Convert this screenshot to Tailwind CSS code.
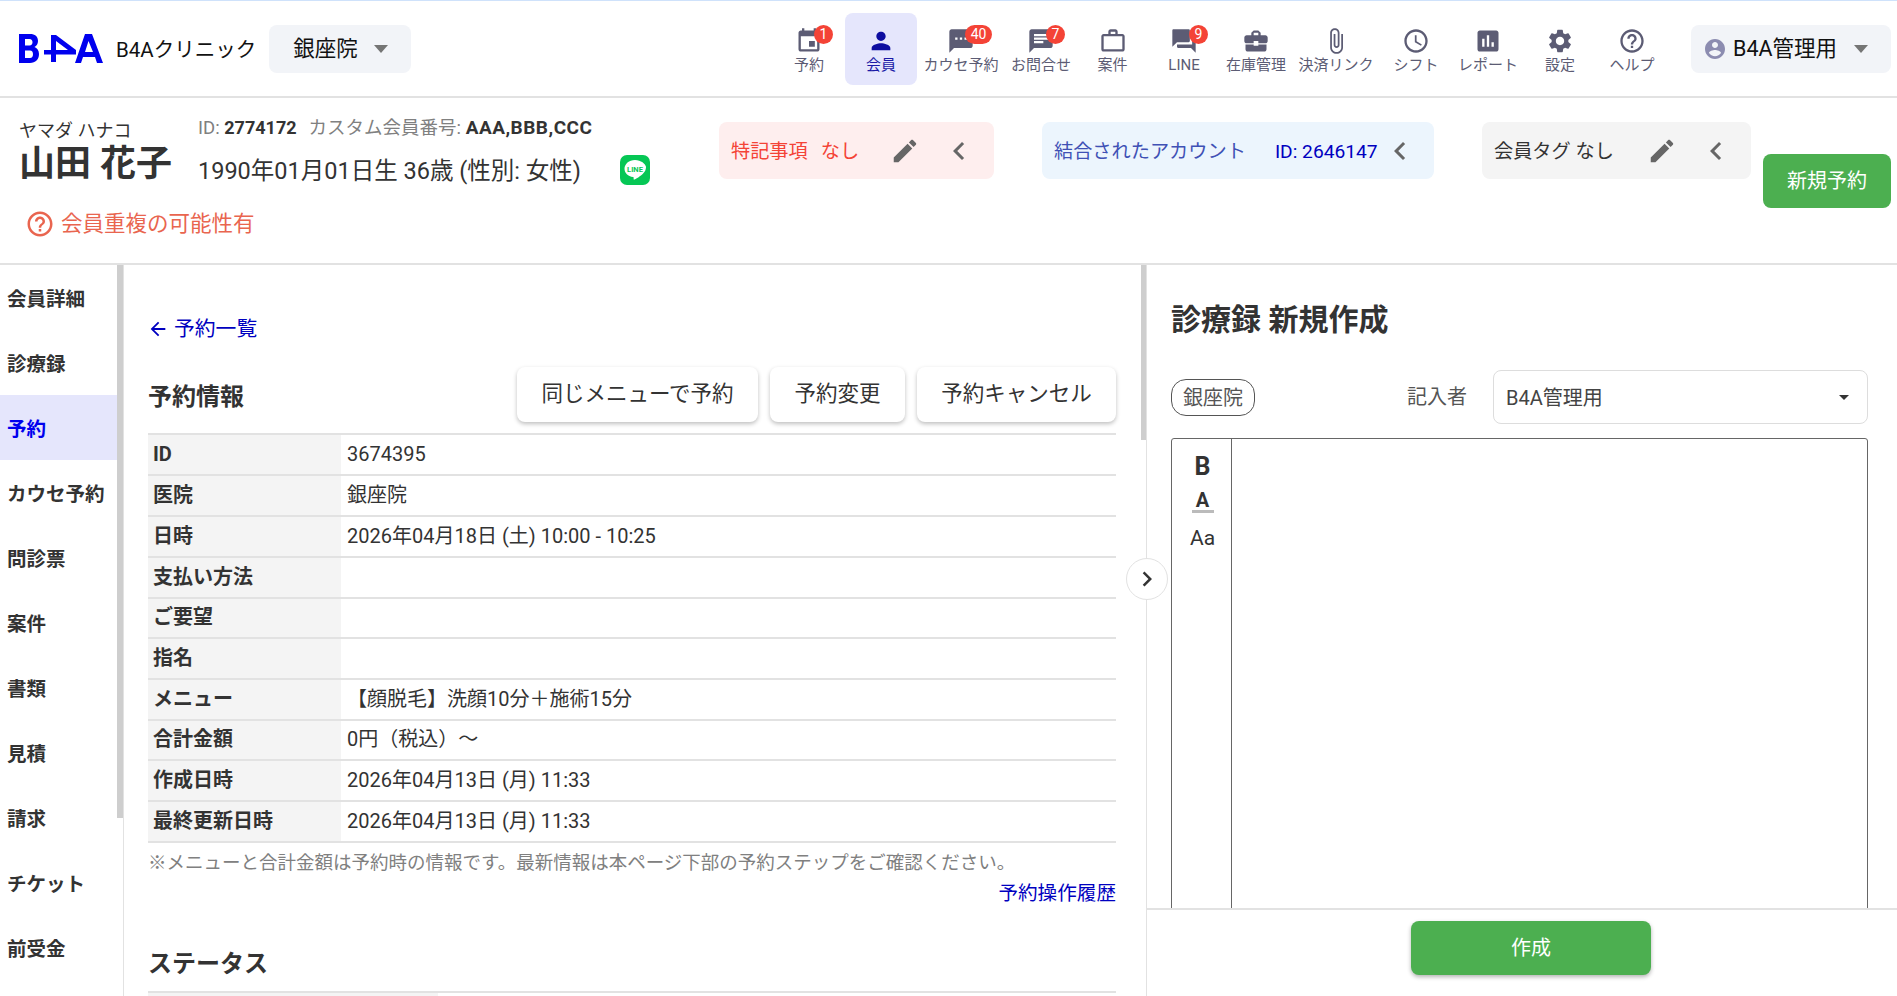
<!DOCTYPE html>
<html lang="ja">
<head>
<meta charset="utf-8">
<title>B4A</title>
<script src="https://cdn.jsdelivr.net/npm/@tailwindcss/browser@4"></script>
</head>
<body class="font-['Roboto','Noto_Sans_CJK_JP',sans-serif] text-[#333] bg-white">
<div class="h-[996px] w-[1897px] overflow-hidden flex flex-col relative">
  <!-- top nav -->
  <header class="h-[98px] shrink-0 flex items-center border-t border-t-[#cfe2fb] border-b-2 border-b-[#e2e2e2] pr-[6px]">
    <svg class="ml-[19px] w-[84px] h-[29px] shrink-0" viewBox="0 0 84 29" fill="#0000ee"><path fill-rule="evenodd" d="M0 0h11c5 0 8 2.500 8 7 0 3-1.500 5-3.500 6 2.500 1 4.500 3.500 4.500 7 0 5.500-3.500 9-9 9H0zM6 5v6.500h4.500c2 0 3-1.300 3-3.200S12.500 5 10.500 5zM6 16.500V24h5c2 0 3-1.500 3-3.700s-1-3.800-3-3.800z"/><path fill-rule="evenodd" d="M32 1h5l20 15v4.500H37V28h-5v-7.500h-7V16h7zM37 7v9h12z"/><path fill-rule="evenodd" d="M66 0h7l11 29h-6l-2-6H64l-2 6h-6zM69.500 7L66 18h8z"/></svg>
    <span class="ml-[13px] pt-[4px] text-[20.5px] text-[#111] leading-none whitespace-nowrap">B4Aクリニック</span>
    <div class="ml-[13px] w-[142px] h-[48px] rounded-lg bg-[#f2f4f8] flex items-center pl-[24px] text-[21.5px] text-[#111] whitespace-nowrap"><span class="pt-[2px]">銀座院</span><span class="ml-[16px] w-0 h-0 border-x-[7px] border-x-transparent border-t-[8px] border-t-[#757575]"></span></div>

    <nav class="ml-auto flex items-stretch text-[15px] text-[#5c5c74]">
      <a class="relative w-[72px] h-[72px] flex flex-col items-center pt-[14px]">
        <svg class="w-[28px] h-[28px]" viewBox="0 0 24 24" fill="#5c5c74"><path d="M17 12h-5v5h5v-5zM16 1v2H8V1H6v2H5c-1.110 0-1.990.9-1.990 2L3 19c0 1.100.89 2 2 2h14c1.100 0 2-.9 2-2V5c0-1.100-.9-2-2-2h-1V1h-2zm3 18H5V8h14v11z"/></svg>
        <span class="absolute left-[41px] top-[12px] min-w-[19px] h-[19px] rounded-full bg-[#f44336] text-white text-[14px] leading-[19px] text-center">1</span>
        <span class="leading-[20px] whitespace-nowrap">予約</span>
      </a>
      <a class="relative w-[72px] h-[72px] flex flex-col items-center pt-[14px] rounded-lg bg-[#e5e6fc] text-[#1a1aa6]">
        <svg class="w-[28px] h-[28px]" viewBox="0 0 24 24" fill="#0d0da0"><path d="M12 12c2.210 0 4-1.790 4-4s-1.790-4-4-4-4 1.790-4 4 1.790 4 4 4zm0 2c-2.670 0-8 1.340-8 4v2h16v-2c0-2.660-5.330-4-8-4z"/></svg>
        <span class="leading-[20px] whitespace-nowrap">会員</span>
      </a>
      <a class="relative w-[88px] h-[72px] flex flex-col items-center pt-[14px]">
        <svg class="w-[28px] h-[28px]" viewBox="0 0 24 24" fill="#5c5c74"><path d="M20 2H4c-1.100 0-1.990.9-1.990 2L2 22l4-4h14c1.100 0 2-.9 2-2V4c0-1.100-.9-2-2-2zM9 11H7V9h2v2zm4 0h-2V9h2v2zm4 0h-2V9h2v2z"/></svg>
        <span class="absolute left-[48px] top-[12px] min-w-[27px] h-[19px] rounded-full bg-[#f44336] text-white text-[14px] leading-[19px] text-center">40</span>
        <span class="leading-[20px] whitespace-nowrap">カウセ予約</span>
      </a>
      <a class="relative w-[72px] h-[72px] flex flex-col items-center pt-[14px]">
        <svg class="w-[28px] h-[28px]" viewBox="0 0 24 24" fill="#5c5c74"><path d="M20 2H4c-1.100 0-1.990.9-1.990 2L2 22l4-4h14c1.100 0 2-.9 2-2V4c0-1.100-.9-2-2-2zM6 9h12v2H6V9zm8 5H6v-2h8v2zm4-6H6V6h12v2z"/></svg>
        <span class="absolute left-[41px] top-[12px] min-w-[19px] h-[19px] rounded-full bg-[#f44336] text-white text-[14px] leading-[19px] text-center">7</span>
        <span class="leading-[20px] whitespace-nowrap">お問合せ</span>
      </a>
      <a class="relative w-[71px] h-[72px] flex flex-col items-center pt-[14px]">
        <svg class="w-[28px] h-[28px]" viewBox="0 0 24 24" fill="#5c5c74"><path d="M14 6V4h-4v2h4zM4 8v11h16V8H4zm16-2c1.110 0 2 .89 2 2v11c0 1.110-.89 2-2 2H4c-1.110 0-2-.89-2-2l.01-11c0-1.110.88-2 1.990-2h4V4c0-1.110.89-2 2-2h4c1.110 0 2 .89 2 2v2h4z"/></svg>
        <span class="leading-[20px] whitespace-nowrap">案件</span>
      </a>
      <a class="relative w-[72px] h-[72px] flex flex-col items-center pt-[14px]">
        <svg class="w-[28px] h-[28px]" viewBox="0 0 24 24" fill="#5c5c74"><path d="M21 6h-2v9H6v2c0 .55.45 1 1 1h11l4 4V7c0-.55-.45-1-1-1zm-4 6V3c0-.55-.45-1-1-1H3c-.55 0-1 .45-1 1v14l4-4h10c.55 0 1-.45 1-1z"/></svg>
        <span class="absolute left-[41px] top-[12px] min-w-[19px] h-[19px] rounded-full bg-[#f44336] text-white text-[14px] leading-[19px] text-center">9</span>
        <span class="leading-[20px] whitespace-nowrap">LINE</span>
      </a>
      <a class="relative w-[72px] h-[72px] flex flex-col items-center pt-[14px]">
        <svg class="w-[28px] h-[28px]" viewBox="0 0 24 24" fill="#5c5c74"><path d="M10 16v-1H3.010L3 19c0 1.110.89 2 2 2h14c1.110 0 2-.89 2-2v-4h-7v1h-4zm10-9h-4.010V5l-2-2h-4l-2 2v2H4c-1.100 0-2 .9-2 2v3c0 1.110.89 2 2 2h6v-2h4v2h6c1.100 0 2-.9 2-2V9c0-1.100-.9-2-2-2zm-6 0h-4V5h4v2z"/></svg>
        <span class="leading-[20px] whitespace-nowrap">在庫管理</span>
      </a>
      <a class="relative w-[88px] h-[72px] flex flex-col items-center pt-[14px]">
        <svg class="w-[28px] h-[28px]" viewBox="0 0 24 24" fill="#5c5c74"><path d="M16.500 6v11.500c0 2.210-1.790 4-4 4s-4-1.790-4-4V5c0-1.380 1.120-2.500 2.500-2.500s2.500 1.120 2.500 2.500v10.500c0 .55-.45 1-1 1s-1-.45-1-1V6H10v9.500c0 1.380 1.120 2.500 2.500 2.500s2.500-1.120 2.500-2.500V5c0-2.210-1.790-4-4-4S7 2.790 7 5v12.500c0 3.040 2.460 5.500 5.500 5.500s5.500-2.460 5.500-5.500V6h-1.500z"/></svg>
        <span class="leading-[20px] whitespace-nowrap">決済リンク</span>
      </a>
      <a class="relative w-[72px] h-[72px] flex flex-col items-center pt-[14px]">
        <svg class="w-[28px] h-[28px]" viewBox="0 0 24 24" fill="#5c5c74"><path d="M11.990 2C6.470 2 2 6.480 2 12s4.470 10 9.990 10C17.520 22 22 17.520 22 12S17.520 2 11.990 2zM12 20c-4.420 0-8-3.580-8-8s3.580-8 8-8 8 3.580 8 8-3.580 8-8 8zm.5-13H11v6l5.250 3.150.75-1.230-4.500-2.670z"/></svg>
        <span class="leading-[20px] whitespace-nowrap">シフト</span>
      </a>
      <a class="relative w-[72px] h-[72px] flex flex-col items-center pt-[14px]">
        <svg class="w-[28px] h-[28px]" viewBox="0 0 24 24" fill="#5c5c74"><path d="M19 3H5c-1.100 0-2 .9-2 2v14c0 1.100.9 2 2 2h14c1.100 0 2-.9 2-2V5c0-1.100-.9-2-2-2zM9 17H7v-7h2v7zm4 0h-2V7h2v10zm4 0h-2v-4h2v4z"/></svg>
        <span class="leading-[20px] whitespace-nowrap">レポート</span>
      </a>
      <a class="relative w-[72px] h-[72px] flex flex-col items-center pt-[14px]">
        <svg class="w-[28px] h-[28px]" viewBox="0 0 24 24" fill="#5c5c74"><path d="M19.140 12.940c.04-.3.06-.61.06-.94 0-.32-.02-.64-.07-.94l2.030-1.580c.18-.14.23-.41.12-.61l-1.920-3.320c-.12-.22-.37-.29-.59-.22l-2.390.96c-.5-.38-1.030-.7-1.620-.94l-.36-2.540c-.04-.24-.24-.41-.48-.41h-3.840c-.24 0-.43.17-.47.41l-.36 2.540c-.59.24-1.130.57-1.620.94l-2.390-.96c-.22-.08-.47 0-.59.22L2.740 8.870c-.12.21-.08.47.12.61l2.030 1.580c-.05.3-.09.63-.09.94s.02.64.07.94l-2.030 1.580c-.18.14-.23.41-.12.61l1.920 3.320c.12.22.37.29.59.22l2.390-.96c.5.38 1.030.7 1.620.94l.36 2.540c.05.24.24.41.48.41h3.840c.24 0 .44-.17.47-.41l.36-2.540c.59-.24 1.130-.56 1.620-.94l2.390.96c.22.08.47 0 .59-.22l1.920-3.320c.12-.22.07-.47-.12-.61l-2.010-1.580zM12 15.600c-1.980 0-3.600-1.620-3.600-3.600s1.620-3.600 3.600-3.600 3.600 1.620 3.600 3.600-1.620 3.600-3.600 3.600z"/></svg>
        <span class="leading-[20px] whitespace-nowrap">設定</span>
      </a>
      <a class="relative w-[72px] h-[72px] flex flex-col items-center pt-[14px]">
        <svg class="w-[28px] h-[28px]" viewBox="0 0 24 24" fill="#5c5c74"><path d="M11 18h2v-2h-2v2zm1-16C6.480 2 2 6.480 2 12s4.480 10 10 10 10-4.480 10-10S17.520 2 12 2zm0 18c-4.410 0-8-3.590-8-8s3.590-8 8-8 8 3.590 8 8-3.590 8-8 8zm0-14c-2.210 0-4 1.790-4 4h2c0-1.100.9-2 2-2s2 .9 2 2c0 2-3 1.750-3 5h2c0-2.250 3-2.500 3-5 0-2.210-1.790-4-4-4z"/></svg>
        <span class="leading-[20px] whitespace-nowrap">ヘルプ</span>
      </a>
    </nav>

    <div class="ml-[23px] w-[200px] h-[48px] rounded-lg bg-[#f2f4f8] flex items-center pl-[12px] text-[21.5px] text-[#111]">
      <svg class="w-[24px] h-[24px] shrink-0" viewBox="0 0 24 24" fill="#8c8cb0"><path d="M12 2C6.480 2 2 6.480 2 12s4.480 10 10 10 10-4.480 10-10S17.520 2 12 2zm0 3c1.660 0 3 1.340 3 3s-1.340 3-3 3-3-1.340-3-3 1.340-3 3-3zm0 14.200c-2.500 0-4.710-1.280-6-3.220.03-1.990 4-3.080 6-3.080 1.990 0 5.970 1.090 6 3.080-1.290 1.940-3.500 3.220-6 3.220z"/></svg>
      <span class="ml-[6px] pt-[2px] whitespace-nowrap">B4A管理用</span>
      <span class="ml-[17px] w-0 h-0 border-x-[7px] border-x-transparent border-t-[8px] border-t-[#757575]"></span>
    </div>
  </header>

  <!-- member strip -->
  <section class="h-[167px] shrink-0 border-b-2 border-b-[#e2e2e2] flex items-start pr-[6px]">
    <div class="w-[198px] shrink-0 pl-[19px] pt-[22px]">
      <div class="text-[18px] leading-[22px] text-[#333] whitespace-nowrap">ヤマダ ハナコ</div>
      <div class="text-[36px] leading-[44px] font-bold text-[#333] whitespace-nowrap">山田 花子</div>
    </div>
    <div class="w-[521px] shrink-0 pt-[19px]">
      <div class="text-[18.5px] leading-[22px] text-[#808080] whitespace-nowrap">ID: <b class="text-[#333] text-[18px]">2774172</b><span class="ml-[12px]">カスタム会員番号: </span><b class="text-[#333] text-[19px] tracking-[0.5px]">AAA,BBB,CCC</b></div>
      <div class="flex items-center mt-[16px]">
        <span class="text-[23.5px] leading-[32px] whitespace-nowrap">1990年01月01日生 36歳 (性別: 女性)</span>
        <svg class="ml-[39px] -mt-[2px] w-[30px] h-[30px] shrink-0" viewBox="0 0 30 30"><rect width="30" height="30" rx="7" fill="#06c755"/><path d="M15 5C9 5 4.500 9 4.500 13.800c0 4.200 3.500 7.700 8.500 8.300.9.200.7 1.100.6 1.800-.1.600.3.900 1 .6 2.200-1 8.200-4.800 10.300-8.300.8-1.300 1.100-2.800 1.100-4.400C25.500 9 21 5 15 5z" fill="#fff"/><text x="15" y="16.500" text-anchor="middle" font-size="7.500" font-weight="700" fill="#06c755" font-family="Roboto">LINE</text></svg>
      </div>
    </div>
    <div class="w-[275px] h-[57px] mt-[24px] shrink-0 rounded-lg bg-[#feeeee] flex items-center pl-[12px] text-[19.2px] text-[#f44336] whitespace-nowrap">
      <span class="pt-[4px]">特記事項</span><span class="ml-[13px] pt-[4px]">なし</span>
      <svg class="ml-[31px] w-[30px] h-[30px] shrink-0" viewBox="0 0 24 24" fill="#666"><path d="M3 17.250V21h3.750L17.810 9.940l-3.750-3.750L3 17.250zM20.710 7.040c.39-.39.39-1.020 0-1.410l-2.340-2.340c-.39-.39-1.020-.39-1.410 0l-1.830 1.830 3.750 3.750 1.830-1.830z"/></svg>
      <svg class="ml-[21px] w-[36px] h-[36px] shrink-0" viewBox="0 0 24 24" fill="#666"><path d="M15.410 7.410L14 6l-6 6 6 6 1.410-1.410L10.830 12z"/></svg>
    </div>
    <div class="ml-[48px] w-[392px] h-[57px] mt-[24px] shrink-0 rounded-lg bg-[#ecf5fd] flex items-center pl-[12px] text-[19.2px] text-[#3f51b5] whitespace-nowrap">
      <span class="pt-[4px]">結合されたアカウント</span><span class="ml-[29px] pt-[4px] text-[#0000c0]">ID: 2646147</span>
      <svg class="ml-[4px] w-[36px] h-[36px] shrink-0" viewBox="0 0 24 24" fill="#666"><path d="M15.410 7.410L14 6l-6 6 6 6 1.410-1.410L10.830 12z"/></svg>
    </div>
    <div class="ml-[48px] w-[269px] h-[57px] mt-[24px] shrink-0 rounded-lg bg-[#f4f4f4] flex items-center pl-[12px] text-[19.2px] text-[#333] whitespace-nowrap">
      <span class="pt-[4px]">会員タグ なし</span>
      <svg class="ml-[33px] w-[30px] h-[30px] shrink-0" viewBox="0 0 24 24" fill="#666"><path d="M3 17.250V21h3.750L17.810 9.940l-3.750-3.750L3 17.250zM20.710 7.040c.39-.39.39-1.020 0-1.410l-2.340-2.340c-.39-.39-1.020-.39-1.410 0l-1.830 1.830 3.750 3.750 1.830-1.830z"/></svg>
      <svg class="ml-[21px] w-[36px] h-[36px] shrink-0" viewBox="0 0 24 24" fill="#666"><path d="M15.410 7.410L14 6l-6 6 6 6 1.410-1.410L10.830 12z"/></svg>
    </div>
    <button class="ml-[12px] mt-[56px] w-[128px] h-[54px] shrink-0 rounded-lg bg-[#4caf50] text-white text-[20px]">新規予約</button>
  </section>
  <div class="absolute left-[25px] top-[209px] flex items-center text-[21.5px] leading-[30px] text-[#e9654f] whitespace-nowrap">
    <svg class="w-[30px] h-[30px]" viewBox="0 0 24 24" fill="#e9654f"><path d="M11 18h2v-2h-2v2zm1-16C6.480 2 2 6.480 2 12s4.480 10 10 10 10-4.480 10-10S17.520 2 12 2zm0 18c-4.410 0-8-3.590-8-8s3.590-8 8-8 8 3.590 8 8-3.590 8-8 8zm0-14c-2.210 0-4 1.790-4 4h2c0-1.100.9-2 2-2s2 .9 2 2c0 2-3 1.750-3 5h2c0-2.250 3-2.500 3-5 0-2.210-1.790-4-4-4z"/></svg>
    <span class="ml-[6px]">会員重複の可能性有</span>
  </div>

  <!-- body -->
  <div class="flex-1 min-h-0 flex">
    <aside class="relative w-[124px] shrink-0 border-r border-r-[#e2e2e2] overflow-hidden">
      <ul class="w-[117px] text-[19.5px] font-bold text-[#333]">
        <li class="h-[65px] flex items-center pl-[7px] pt-[4px]">会員詳細</li>
        <li class="h-[65px] flex items-center pl-[7px] pt-[4px]">診療録</li>
        <li class="h-[65px] flex items-center pl-[7px] pt-[4px] bg-[#e5e6fc] text-[#0000ee]">予約</li>
        <li class="h-[65px] flex items-center pl-[7px] pt-[4px] whitespace-nowrap">カウセ予約</li>
        <li class="h-[65px] flex items-center pl-[7px] pt-[4px]">問診票</li>
        <li class="h-[65px] flex items-center pl-[7px] pt-[4px]">案件</li>
        <li class="h-[65px] flex items-center pl-[7px] pt-[4px]">書類</li>
        <li class="h-[65px] flex items-center pl-[7px] pt-[4px]">見積</li>
        <li class="h-[65px] flex items-center pl-[7px] pt-[4px]">請求</li>
        <li class="h-[65px] flex items-center pl-[7px] pt-[4px]">チケット</li>
        <li class="h-[65px] flex items-center pl-[7px] pt-[4px]">前受金</li>
      </ul>
      <div class="absolute left-[117px] top-0 w-[6px] h-[553px] bg-[#cecece]"></div>
    </aside>

    <main class="relative w-[1023px] shrink-0 border-r border-r-[#e2e2e2] overflow-hidden pl-[24px] pr-[30px]">
      <div class="absolute right-0 top-0 w-[5px] h-[175px] bg-[#cecece]"></div>
      <a class="mt-[51px] h-[28px] flex items-center text-[20.8px] text-[#0000c0]">
        <svg class="w-[22px] h-[22px] -ml-[1px] -mt-[2px]" viewBox="0 0 24 24" fill="#0000c0"><path d="M20 11H7.830l5.590-5.590L12 4l-8 8 8 8 1.410-1.410L7.830 13H20v-2z"/></svg>
        <span class="ml-[5px]">予約一覧</span>
      </a>
      <div class="flex items-center justify-between mt-[23px] h-[55px]">
        <h2 class="text-[24px] font-bold text-[#333] pt-[5px]">予約情報</h2>
        <div class="flex gap-[12px] text-[21.5px] text-[#333]">
          <button class="w-[241px] h-[55px] rounded-lg bg-white shadow-[0_2px_4px_rgba(0,0,0,0.25)] whitespace-nowrap">同じメニューで予約</button>
          <button class="w-[135px] h-[55px] rounded-lg bg-white shadow-[0_2px_4px_rgba(0,0,0,0.25)] whitespace-nowrap">予約変更</button>
          <button class="w-[199px] h-[55px] rounded-lg bg-white shadow-[0_2px_4px_rgba(0,0,0,0.25)] whitespace-nowrap">予約キャンセル</button>
        </div>
      </div>
      <table class="mt-[11px] w-full border-collapse text-[20px] leading-[28px] border-t-2 border-t-[#e2e2e2]">
        <tbody>
          <tr class="h-[41px] border-b-2 border-b-[#e2e2e2]"><th class="w-[193px] bg-[#f4f4f4] text-left font-bold pl-[5px] pb-[2px]">ID</th><td class="pl-[6px] pb-[2px]">3674395</td></tr>
          <tr class="h-[41px] border-b-2 border-b-[#e2e2e2]"><th class="bg-[#f4f4f4] text-left font-bold pl-[5px] pb-[2px]">医院</th><td class="pl-[6px] pb-[2px]">銀座院</td></tr>
          <tr class="h-[41px] border-b-2 border-b-[#e2e2e2]"><th class="bg-[#f4f4f4] text-left font-bold pl-[5px] pb-[2px]">日時</th><td class="pl-[6px] pb-[2px]">2026年04月18日 (土) 10:00 - 10:25</td></tr>
          <tr class="h-[41px] border-b-2 border-b-[#e2e2e2]"><th class="bg-[#f4f4f4] text-left font-bold pl-[5px] pb-[2px]">支払い方法</th><td></td></tr>
          <tr class="h-[40px] border-b-2 border-b-[#e2e2e2]"><th class="bg-[#f4f4f4] text-left font-bold pl-[5px] pb-[2px]">ご要望</th><td></td></tr>
          <tr class="h-[41px] border-b-2 border-b-[#e2e2e2]"><th class="bg-[#f4f4f4] text-left font-bold pl-[5px] pb-[2px]">指名</th><td></td></tr>
          <tr class="h-[41px] border-b-2 border-b-[#e2e2e2]"><th class="bg-[#f4f4f4] text-left font-bold pl-[5px] pb-[2px]">メニュー</th><td class="pl-[6px] pb-[2px]">【顔脱毛】洗顔10分＋施術15分</td></tr>
          <tr class="h-[40px] border-b-2 border-b-[#e2e2e2]"><th class="bg-[#f4f4f4] text-left font-bold pl-[5px] pb-[2px]">合計金額</th><td class="pl-[6px] pb-[2px]">0円（税込）〜</td></tr>
          <tr class="h-[41px] border-b-2 border-b-[#e2e2e2]"><th class="bg-[#f4f4f4] text-left font-bold pl-[5px] pb-[2px]">作成日時</th><td class="pl-[6px] pb-[2px]">2026年04月13日 (月) 11:33</td></tr>
          <tr class="h-[41px] border-b-2 border-b-[#e2e2e2]"><th class="bg-[#f4f4f4] text-left font-bold pl-[5px] pb-[2px]">最終更新日時</th><td class="pl-[6px] pb-[2px]">2026年04月13日 (月) 11:33</td></tr>
        </tbody>
      </table>
      <p class="mt-[8px] text-[18.5px] leading-[24px] text-[#808080] whitespace-nowrap">※メニューと合計金額は予約時の情報です。最新情報は本ページ下部の予約ステップをご確認ください。</p>
      <p class="mt-[6px] text-right text-[19.6px] leading-[26px]"><a class="text-[#0000c0]">予約操作履歴</a></p>
      <h2 class="mt-[39px] text-[24px] leading-[36px] font-bold text-[#333]">ステータス</h2>
      <div class="mt-[9px] border-t-2 border-t-[#e2e2e2]"><div class="w-[290px] h-[41px] bg-[#f4f4f4]"></div></div>
    </main>

    <section class="flex-1 min-w-0 flex flex-col">
      <div class="flex-1 min-h-0 overflow-hidden pl-[24px] pr-[29px]">
        <h2 class="mt-[37px] text-[30px] leading-[36px] font-bold text-[#333] whitespace-nowrap">診療録 新規作成</h2>
        <div class="mt-[32px] h-[54px] flex items-center">
          <span class="w-[84px] h-[37px] mt-[1px] pt-[1px] rounded-[15px] border border-[#555] flex items-center justify-center text-[20px] text-[#555] whitespace-nowrap">銀座院</span>
          <span class="ml-[152px] text-[20px] text-[#555] whitespace-nowrap">記入者</span>
          <div class="ml-[26px] w-[375px] h-[54px] rounded-lg border border-[#ddd] flex items-center justify-between pl-[12px] pr-[18px] text-[20px] text-[#444]"><span class="pt-[2px]">B4A管理用</span><span class="w-0 h-0 border-x-[5px] border-x-transparent border-t-[5px] border-t-[#333]"></span></div>
        </div>
        <div class="mt-[14px] h-[600px] border border-[#666] rounded-t-[3px] flex">
          <div class="w-[60px] h-full pl-[2px] border-r border-r-[#666] flex flex-col items-center pt-[14px]">
            <span class="text-[25px] leading-[28px] font-bold text-[#333]">B</span>
            <span class="mt-[9px] text-[20px] leading-[20px] font-bold text-[#333]">A</span>
            <span class="w-[22px] h-[3px] bg-[#bbb]"></span>
            <span class="mt-[12px] text-[21px] leading-[26px] text-[#333]">Aa</span>
          </div>
        </div>
      </div>
      <div class="h-[88px] shrink-0 border-t-2 border-t-[#e2e2e2] flex justify-center pl-[18px] pt-[11px]">
        <button class="w-[240px] h-[54px] rounded-lg bg-[#4caf50] text-white text-[20px] shadow-[0_2px_4px_rgba(0,0,0,0.3)]">作成</button>
      </div>
    </section>
  </div>
  <button class="absolute left-[1126px] top-[558px] w-[42px] h-[42px] rounded-full bg-white border border-[#e2e2e2] flex items-center justify-center">
    <svg class="w-[30px] h-[30px]" viewBox="0 0 24 24" fill="#333"><path d="M10 6L8.590 7.410 13.170 12l-4.580 4.590L10 18l6-6z"/></svg>
  </button>
</div>
</body>
</html>
